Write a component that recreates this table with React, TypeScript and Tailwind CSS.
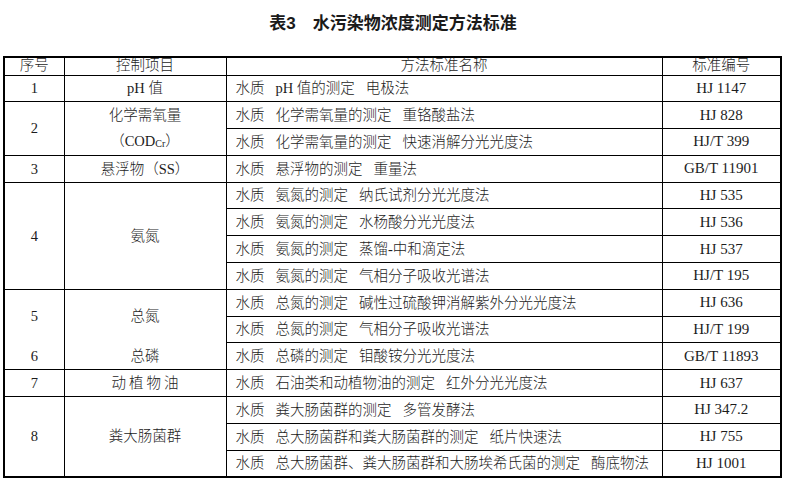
import React from "react";

const td = "border border-black p-0";

const Sp = () => <span className="inline-block w-[11px]" />;

const withSpaces = (t: string) => {
  const parts = t.split("　");
  return parts.map((p, i) => (
    <React.Fragment key={i}>
      {i > 0 && <Sp />}
      {p}
    </React.Fragment>
  ));
};

const M = ({ t }: { t: string }) => (
  <td className={`${td} pl-[9px] text-left whitespace-nowrap`}>{withSpaces(t)}</td>
);
const C = ({ t }: { t: string }) => (
  <td className={`${td} text-center text-[15px] whitespace-nowrap`}>{t}</td>
);
const L = ({ t, span = 1 }: { t: React.ReactNode; span?: number }) => (
  <td rowSpan={span} className={`${td} text-center whitespace-nowrap`}>
    {t}
  </td>
);

export default function App() {
  return (
    <div className="w-[786px] h-[483px] bg-white text-[#1c1c1c] font-['Liberation_Serif','Noto_Sans_CJK_SC',serif] font-light text-[14.5px] leading-none">
      <div className="h-[46px] flex items-center justify-center font-['Liberation_Sans','Noto_Sans_CJK_SC',sans-serif] font-bold text-[17px] text-[#1a1a1a]">
        表3　水污染物浓度测定方法标准
      </div>
      <table className="ml-[3px] mt-[10px] w-[777px] table-fixed border-collapse border-2 border-black">
        <colgroup>
          <col className="w-[60px]" />
          <col className="w-[162px]" />
          <col className="w-[436px]" />
          <col className="w-[119px]" />
        </colgroup>
        <thead>
          <tr className="h-[18px]">
            <th className={`${td} font-light pb-[2px]`}>序号</th>
            <th className={`${td} font-light pb-[2px]`}>控制项目</th>
            <th className={`${td} font-light pb-[2px]`}>方法标准名称</th>
            <th className={`${td} font-light pb-[2px]`}>标准编号</th>
          </tr>
        </thead>
        <tbody>
          <tr className="h-[26.8px]">
            <L t="1" />
            <L t="pH 值" />
            <M t="水质　pH 值的测定　电极法" />
            <C t="HJ 1147" />
          </tr>
          <tr className="h-[26.8px]">
            <L t="2" span={2} />
            <td rowSpan={2} className={`${td} text-center align-top`}>
              <div className="h-[26px] flex items-center justify-center">化学需氧量</div>
              <div className="h-[26px] flex items-center justify-center">
                （COD<sub className="text-[10px]">Cr</sub>）
              </div>
            </td>
            <M t="水质　化学需氧量的测定　重铬酸盐法" />
            <C t="HJ 828" />
          </tr>
          <tr className="h-[26.8px]">
            <M t="水质　化学需氧量的测定　快速消解分光光度法" />
            <C t="HJ/T 399" />
          </tr>
          <tr className="h-[26.8px]">
            <L t="3" />
            <L t="悬浮物（SS）" />
            <M t="水质　悬浮物的测定　重量法" />
            <C t="GB/T 11901" />
          </tr>
          <tr className="h-[26.8px]">
            <L t="4" span={4} />
            <L t="氨氮" span={4} />
            <M t="水质　氨氮的测定　纳氏试剂分光光度法" />
            <C t="HJ 535" />
          </tr>
          <tr className="h-[26.8px]">
            <M t="水质　氨氮的测定　水杨酸分光光度法" />
            <C t="HJ 536" />
          </tr>
          <tr className="h-[26.8px]">
            <M t="水质　氨氮的测定　蒸馏-中和滴定法" />
            <C t="HJ 537" />
          </tr>
          <tr className="h-[26.8px]">
            <M t="水质　氨氮的测定　气相分子吸收光谱法" />
            <C t="HJ/T 195" />
          </tr>
          <tr className="h-[26.8px]">
            <td rowSpan={3} className={`${td} text-center align-top`}>
              <div className="h-[53px] flex items-center justify-center">5</div>
              <div className="h-[26px] flex items-center justify-center">6</div>
            </td>
            <td rowSpan={3} className={`${td} text-center align-top`}>
              <div className="h-[53px] flex items-center justify-center">总氮</div>
              <div className="h-[26px] flex items-center justify-center">总磷</div>
            </td>
            <M t="水质　总氮的测定　碱性过硫酸钾消解紫外分光光度法" />
            <C t="HJ 636" />
          </tr>
          <tr className="h-[26.8px]">
            <M t="水质　总氮的测定　气相分子吸收光谱法" />
            <C t="HJ/T 199" />
          </tr>
          <tr className="h-[26.8px]">
            <M t="水质　总磷的测定　钼酸铵分光光度法" />
            <C t="GB/T 11893" />
          </tr>
          <tr className="h-[26.8px]">
            <L t="7" />
            <td className={`${td} text-center whitespace-nowrap tracking-[3px] pl-[3px]`}>动植物油</td>
            <M t="水质　石油类和动植物油的测定　红外分光光度法" />
            <C t="HJ 637" />
          </tr>
          <tr className="h-[26.8px]">
            <L t="8" span={3} />
            <L t="粪大肠菌群" span={3} />
            <M t="水质　粪大肠菌群的测定　多管发酵法" />
            <C t="HJ 347.2" />
          </tr>
          <tr className="h-[26.8px]">
            <M t="水质　总大肠菌群和粪大肠菌群的测定　纸片快速法" />
            <C t="HJ 755" />
          </tr>
          <tr className="h-[26.8px]">
            <M t="水质　总大肠菌群、粪大肠菌群和大肠埃希氏菌的测定　酶底物法" />
            <C t="HJ 1001" />
          </tr>
        </tbody>
      </table>
    </div>
  );
}
